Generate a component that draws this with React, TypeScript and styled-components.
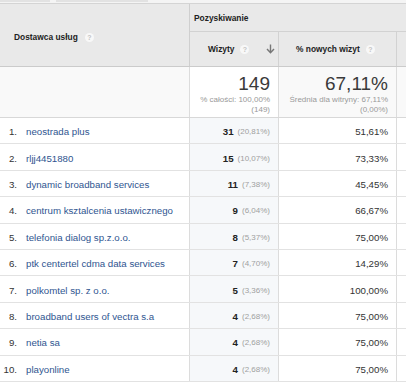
import React from 'react';
import styled, { createGlobalStyle } from 'styled-components';

const GlobalStyle = createGlobalStyle`
  html, body {
    margin: 0;
    padding: 0;
    background: #fff;
  }
  body {
    font-family: 'Liberation Sans', Arial, sans-serif;
    color: #333;
    overflow: hidden;
  }
`;

const COLS = '190px 89px 118px 1fr';

type Row = {
  name: string;
  visits: number;
  share: string;
  newPct: string;
};

const rows: Row[] = [
  { name: 'neostrada plus', visits: 31, share: '(20,81%)', newPct: '51,61%' },
  { name: 'rljj4451880', visits: 15, share: '(10,07%)', newPct: '73,33%' },
  { name: 'dynamic broadband services', visits: 11, share: '(7,38%)', newPct: '45,45%' },
  { name: 'centrum ksztalcenia ustawicznego', visits: 9, share: '(6,04%)', newPct: '66,67%' },
  { name: 'telefonia dialog sp.z.o.o.', visits: 8, share: '(5,37%)', newPct: '75,00%' },
  { name: 'ptk centertel cdma data services', visits: 7, share: '(4,70%)', newPct: '14,29%' },
  { name: 'polkomtel sp. z o.o.', visits: 5, share: '(3,36%)', newPct: '100,00%' },
  { name: 'broadband users of vectra s.a', visits: 4, share: '(2,68%)', newPct: '75,00%' },
  { name: 'netia sa', visits: 4, share: '(2,68%)', newPct: '75,00%' },
  { name: 'playonline', visits: 4, share: '(2,68%)', newPct: '75,00%' },
];

const Page = styled.div`
  width: 406px;
  height: 384px;
  overflow: hidden;
`;

const TabStrip = styled.div`
  display: flex;
  gap: 6px;
  height: 3px;
  background: #f4f4f4;
  border-bottom: 1px solid #d4d4d4;
`;

const TabEdge = styled.div<{ $w: number }>`
  width: ${(p) => p.$w}px;
  height: 2px;
  background: #e2e2e2;
`;

const Head = styled.div`
  display: grid;
  grid-template-columns: ${COLS};
  grid-template-rows: 28px 34px;
  background: #e9e9e9;
  border-bottom: 1px solid #cbcbcb;
  font-size: 8.4px;
  font-weight: bold;
  color: #222;
`;

const DimHead = styled.div`
  grid-row: 1 / span 2;
  display: flex;
  align-items: center;
  gap: 7px;
  padding: 4px 0 0 14px;
  border-right: 1px solid #cfcfcf;
`;

const GroupHead = styled.div`
  grid-column: 2 / -1;
  display: flex;
  align-items: center;
  padding-left: 4px;
  border-bottom: 1px solid #d2d2d2;
`;

const SubHead = styled.div<{ $pl?: number }>`
  display: flex;
  align-items: center;
  gap: 6px;
  padding-left: ${(p) => p.$pl ?? 0}px;
  padding-right: 3px;
  border-right: 1px solid #d2d2d2;

  &:last-child {
    border-right: 0;
  }
`;

const Help = styled.span`
  width: 9px;
  height: 9px;
  border-radius: 50%;
  background: #f8f8f8;
  color: #c4c4c4;
  font-size: 7px;
  font-weight: bold;
  line-height: 9px;
  text-align: center;
  flex: none;
`;

const SortArrow = styled.svg`
  margin-left: auto;
  width: 9px;
  height: 10px;
`;

const Totals = styled.div`
  display: grid;
  grid-template-columns: ${COLS};
  height: 50px;
  background: #f9f9f9;
  border-bottom: 1px solid #d8d8d8;
`;

const TotalCell = styled.div<{ $bg?: string }>`
  display: flex;
  flex-direction: column;
  align-items: flex-end;
  padding: 6px 8px 0 0;
  background: ${(p) => p.$bg ?? 'transparent'};
  border-right: 1px solid #dcdcdc;

  &:last-child {
    border-right: 0;
  }
`;

const BigNum = styled.div`
  font-size: 19px;
  line-height: 22px;
  color: #3a3a3a;
`;

const SubNote = styled.div`
  font-size: 8px;
  line-height: 10px;
  color: #999;
  text-align: right;
`;

const DataRow = styled.div`
  display: grid;
  grid-template-columns: ${COLS};
  height: 26.4px;
  box-sizing: border-box;
  border-bottom: 1px solid #e2e2e2;
  font-size: 9.7px;
`;

const NameCell = styled.div`
  display: flex;
  align-items: center;
  padding-top: 2px;
  border-right: 1px solid #dcdcdc;
`;

const Index = styled.span`
  width: 17px;
  text-align: right;
  color: #333;
`;

const Name = styled.a`
  margin-left: 9px;
  color: #2f5590;
  text-decoration: none;
  white-space: nowrap;
`;

const ValueCell = styled.div<{ $bg?: string }>`
  display: flex;
  align-items: center;
  justify-content: flex-end;
  padding: 2px 8px 0 0;
  background: ${(p) => p.$bg ?? '#fff'};
  border-right: 1px solid #dcdcdc;
  color: #333;

  &:last-child {
    border-right: 0;
  }
`;

const Count = styled.b`
  font-weight: bold;
  color: #222;
`;

const Share = styled.span`
  display: inline-block;
  min-width: 28px;
  margin-left: 4px;
  text-align: right;
  font-size: 8px;
  color: #a0a0a0;
`;

const Arrow = () => (
  <SortArrow viewBox="0 0 9 10">
    <path d="M4.5 0.5v8M1 5l3.5 3.8L8 5" fill="none" stroke="#777" strokeWidth="1.4" />
  </SortArrow>
);

export default function App() {
  return (
    <Page>
      <GlobalStyle />
      <TabStrip>
        <TabEdge $w={50} />
        <TabEdge $w={92} />
      </TabStrip>
      <Head>
        <DimHead>
          Dostawca usług <Help>?</Help>
        </DimHead>
        <GroupHead>Pozyskiwanie</GroupHead>
        <SubHead $pl={18}>
          Wizyty <Help>?</Help>
          <Arrow />
        </SubHead>
        <SubHead $pl={17}>
          % nowych wizyt <Help>?</Help>
        </SubHead>
        <SubHead />
      </Head>
      <Totals>
        <TotalCell />
        <TotalCell $bg="#fff">
          <BigNum>149</BigNum>
          <SubNote>% całości: 100,00%</SubNote>
          <SubNote>(149)</SubNote>
        </TotalCell>
        <TotalCell>
          <BigNum>67,11%</BigNum>
          <SubNote>Średnia dla witryny: 67,11%</SubNote>
          <SubNote>(0,00%)</SubNote>
        </TotalCell>
        <TotalCell />
      </Totals>
      {rows.map((r, i) => (
        <DataRow key={r.name}>
          <NameCell>
            <Index>{i + 1}.</Index>
            <Name>{r.name}</Name>
          </NameCell>
          <ValueCell $bg="#f6f8fa">
            <Count>{r.visits}</Count>
            <Share>{r.share}</Share>
          </ValueCell>
          <ValueCell>{r.newPct}</ValueCell>
          <ValueCell />
        </DataRow>
      ))}
    </Page>
  );
}
